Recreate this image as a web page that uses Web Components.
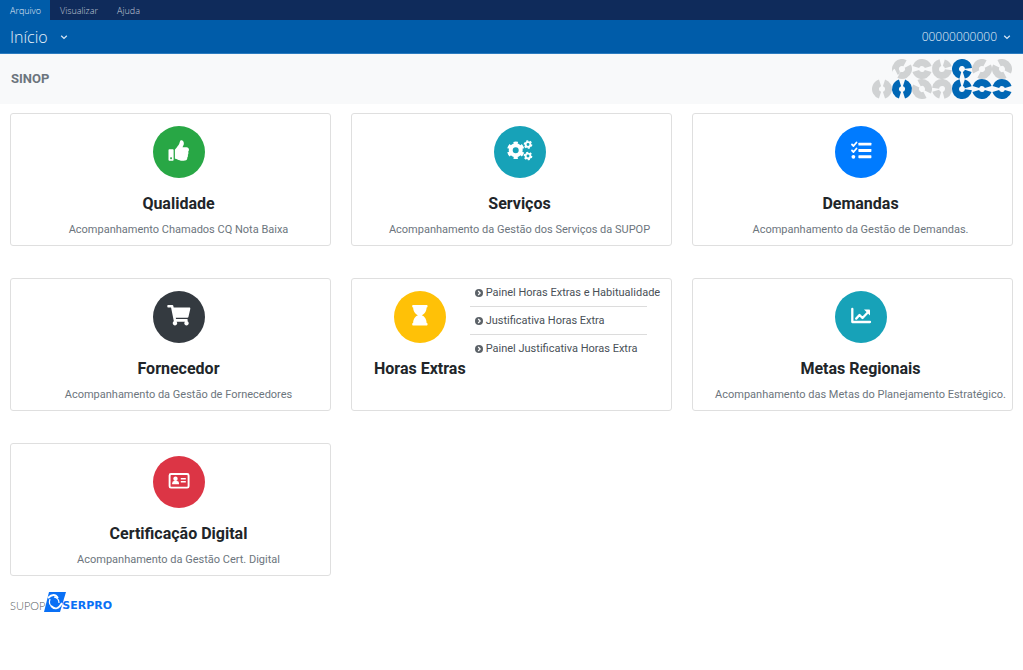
<!DOCTYPE html>
<html lang="pt-BR">
<head>
<meta charset="utf-8">
<meta name="viewport" content="width=device-width, initial-scale=1">
<title>SINOP</title>
<style>
  body { margin: 0; background: #fff; font-family: Roboto, "Liberation Sans", sans-serif; color: #212529; }
</style>
</head>
<body>
<sinop-app></sinop-app>
<script>
const define = (name, html, setup) => {
  const template = document.createElement('template');
  template.innerHTML = html;
  customElements.define(name, class extends HTMLElement {
    connectedCallback() {
      if (this.shadowRoot) return;
      const root = this.attachShadow({ mode: 'open' });
      root.append(template.content.cloneNode(true));
      if (setup) setup(this, root);
    }
  });
};

/* Each glyph is drawn on a 52 x 52 disc. */
const glyphs = {
  thumb: '<path transform="translate(15.5 14.3) scale(.04)" d="M104 224H24c-13.255 0-24 10.745-24 24v240c0 13.255 10.745 24 24 24h80c13.255 0 24-10.745 24-24V248c0-13.255-10.745-24-24-24zM64 472c-13.255 0-24-10.745-24-24s10.745-24 24-24 24 10.745 24 24-10.745 24-24 24zM384 81.452c0 42.416-25.97 66.208-33.277 94.548h101.723c33.397 0 59.397 27.746 59.553 58.098.084 17.938-7.546 37.249-19.439 49.197l-.11.11c9.836 23.337 8.237 56.037-9.308 79.469 8.681 25.895-.069 57.704-16.382 74.757 4.298 17.598 2.244 32.575-6.148 44.632C440.202 511.587 389.616 512 346.839 512l-2.845-.001c-48.287-.017-87.806-17.598-119.56-31.725-15.957-7.099-36.821-15.887-52.651-16.178-6.54-.12-11.783-5.457-11.783-11.998v-213.77c0-3.2 1.282-6.271 3.558-8.521 39.614-39.144 56.648-80.587 89.117-113.111 14.804-14.832 20.188-37.236 25.393-58.902C282.515 39.293 291.817 0 312 0c24 0 72 8 72 81.452z"/>',
  cogs: '<g fill="none" stroke="#fff"><circle cx="21.7" cy="24.3" r="5" stroke-width="4"/><circle cx="21.7" cy="24.3" r="7.4" stroke-width="2.6" pathLength="60" stroke-dasharray="5.4 4.6" transform="rotate(13.8 21.7 24.3)"/><circle cx="34" cy="18.5" r="2.4" stroke-width="1.9"/><circle cx="34" cy="18.5" r="3.6" stroke-width="1.5" pathLength="60" stroke-dasharray="5.6 4.4"/><circle cx="34" cy="30" r="2.4" stroke-width="1.9"/><circle cx="34" cy="30" r="3.6" stroke-width="1.5" pathLength="60" stroke-dasharray="5.6 4.4"/></g>',
  tasks: '<g fill="none" stroke="#fff" stroke-linejoin="round" stroke-linecap="round" stroke-width="1.8"><path d="M17 18.5l1.5 1.5 3-3.5M17 24.5l1.5 1.5 3-3.5"/></g><circle cx="18.4" cy="30.8" r="1.9"/><rect x="23.4" y="16.7" width="13" height="2.9" rx=".6"/><rect x="23.4" y="23" width="13" height="2.9" rx=".6"/><rect x="23.4" y="29.3" width="13" height="2.9" rx=".6"/>',
  cart: '<path transform="translate(14.3 14) scale(.04)" d="M528.12 301.319l47.273-208C578.806 78.301 567.391 64 551.99 64H159.208l-9.166-44.81C147.758 8.021 137.93 0 126.529 0H24C10.745 0 0 10.745 0 24v16c0 13.255 10.745 24 24 24h69.883l70.248 343.435C147.325 417.1 136 435.222 136 456c0 30.928 25.072 56 56 56s56-25.072 56-56c0-15.674-6.447-29.835-16.824-40h209.647C430.447 426.165 424 440.326 424 456c0 30.928 25.072 56 56 56s56-25.072 56-56c0-22.172-12.888-41.332-31.579-50.405l5.517-24.276c3.413-15.018-8.002-29.319-23.403-29.319H218.117l-6.545-32h293.145c11.206 0 20.92-7.754 23.403-18.681z"/>',
  hourglass: '<path transform="translate(18.2 14) scale(.04)" d="M360 64c13.255 0 24-10.745 24-24V24c0-13.255-10.745-24-24-24H24C10.745 0 0 10.745 0 24v16c0 13.255 10.745 24 24 24 0 90.965 51.016 167.734 120.842 192C75.016 280.266 24 357.035 24 448c-13.255 0-24 10.745-24 24v16c0 13.255 10.745 24 24 24h336c13.255 0 24-10.745 24-24v-16c0-13.255-10.745-24-24-24 0-90.965-51.016-167.734-120.842-192C308.984 231.734 360 154.965 360 64z"/>',
  chart: '<g fill="none" stroke="#fff" stroke-linejoin="round" stroke-linecap="round" stroke-width="2.3"><path d="M17.3 18v13H35"/><path d="M21.2 27.6l3.3-3.6 3 3 5-5.2"/></g><path d="M29 18.4h5.2q.8 0 .8.8v5.2z"/>',
  card: '<rect x="16.6" y="18" width="19" height="13.6" rx="1.4" fill="none" stroke="#fff" stroke-width="1.9"/><circle cx="22.5" cy="22.7" r="2.2"/><path d="M19.2 28.2v-1q0-2.2 2-2.2h2.8q2 0 2 2.2v1z"/><path d="M27.8 22h5v1.5h-5zM27.8 25h5v1.5h-5z"/>'
};

define('icon-disc', `
  <style>
    :host { display: block; width: 52px; height: 52px; }
    svg { display: block; width: 100%; height: 100%; fill: #fff; }
  </style>
  <svg viewBox="0 0 52 52" aria-hidden="true"><circle cx="26" cy="26" r="26"/><g></g></svg>`,
  (host, root) => {
    root.querySelector('circle').setAttribute('fill', host.getAttribute('color'));
    root.querySelector('g').innerHTML = glyphs[host.getAttribute('glyph')];
  });

define('nav-chevron', `
  <style>
    :host { display: block; width: 8px; height: 8px; }
    svg { display: block; fill: none; stroke: #d6e6f4; stroke-width: 1.3; }
  </style>
  <svg width="8" height="8" viewBox="0 0 8 8" aria-hidden="true"><path d="M1.2 2.8L4 5.4l2.8-2.6"/></svg>`);

define('menu-bar', `
  <style>
    :host { display: block; background: #0f2b5b; font-family: "Open Sans", sans-serif; font-weight: 300; }
    nav { display: flex; height: 20px; }
    a { padding: 0 9px 0 10px; font-size: 9px; line-height: 21px; color: #c6cdd9; text-decoration: none; }
    a[aria-current] { background: #005ca9; color: #e0ecf6; }
  </style>
  <nav><a href="#arquivo" aria-current="true">Arquivo</a><a href="#visualizar">Visualizar</a><a href="#ajuda">Ajuda</a></nav>`);

define('title-bar', `
  <style>
    :host { display: flex; justify-content: space-between; align-items: center; height: 33px; padding: 0 12px 0 10px;
      background: #005ca9; border-bottom: 1px solid #2b7cc0; font-family: "Open Sans", sans-serif; }
    button { display: flex; align-items: center; border: 0; padding: 0; background: none; color: #e6f0f8; font: 300 16px/32px "Open Sans", sans-serif; }
    .page { gap: 12px; }
    .user { gap: 6px; font-size: 12px; }
  </style>
  <button class="page">Início <nav-chevron></nav-chevron></button>
  <button class="user">00000000000 <nav-chevron></nav-chevron></button>`);

define('sinop-mark', `
  <style>
    :host { display: block; }
    svg { display: block; fill: none; stroke-width: 7; }
  </style>
  <svg width="140" height="40" viewBox="0 0 140 40" role="img" aria-label="SINOP"></svg>`,
  (host, root) => {
    const grey = '#d0d2d3', blue = '#0067b5';
    const pair = '72 18 72 18', hookDown = '124 12 28 16', hookUp = '124 16 28 12';
    /* column, row, colour, dash pattern out of 180, start angle */
    const rings = [
      [1, 0, grey, pair, -27], [2, 0, grey, pair, 18], [3, 0, grey, hookUp, 7], [4, 0, blue, hookDown, 105],
      [5, 0, grey, pair, -27], [6, 0, grey, pair, 63],
      [0, 1, grey, pair, 108], [1, 1, blue, pair, 108], [2, 1, grey, pair, 63], [3, 1, grey, hookUp, 187],
      [4, 1, blue, hookUp, 7], [5, 1, blue, pair, 18], [6, 1, blue, pair, 18]
    ];
    root.querySelector('svg').innerHTML = rings.map(([c, r, color, dash, turn]) => {
      const x = c * 20 + 10, y = r * 20 + 10;
      return `<circle cx="${x}" cy="${y}" r="6.5" pathLength="180" stroke="${color}" stroke-dasharray="${dash}" transform="rotate(${turn} ${x} ${y})"/>`;
    }).join('');
  });

define('brand-strip', `
  <style>
    :host { display: flex; justify-content: space-between; align-items: center; height: 50px; padding: 0 11px; background: #f8f9fa; }
    h1 { margin: 0; font-size: 13px; line-height: 20px; font-weight: 700; color: #6c757d; }
  </style>
  <h1>SINOP</h1><sinop-mark></sinop-mark>`);

define('service-card', `
  <style>
    :host { display: flex; box-sizing: border-box; min-width: 0; min-height: 133px; padding: 12px 0 5px 16px;
      border: 1px solid #dfdfdf; border-radius: 3px; background: #fff; }
    .main { flex: 1; display: flex; flex-direction: column; align-items: center; min-width: 0; }
    h2 { margin: 14px 0 4px; font-size: 16px; line-height: 24px; font-weight: 700; white-space: nowrap; }
    p { margin: 0; font-size: 11px; line-height: 20px; color: #6c757d; white-space: nowrap; }
    :host([linked]) .main { flex: none; padding: 0 4px 0 6px; }
  </style>
  <div class="main"><h2></h2><p></p></div><slot></slot>`,
  (host, root) => {
    const disc = document.createElement('icon-disc');
    disc.setAttribute('color', host.getAttribute('color'));
    disc.setAttribute('glyph', host.getAttribute('glyph'));
    root.querySelector('.main').prepend(disc);
    root.querySelector('h2').textContent = host.getAttribute('heading');
    root.querySelector('p').textContent = host.getAttribute('text') || '';
  });

define('panel-link', `
  <style>
    :host { display: block; border-bottom: 1px solid #dcdcdc; }
    :host(:last-child) { border-bottom: 0; }
    a { display: flex; align-items: center; gap: 3px; padding: 0 5px; font-size: 11px; line-height: 27px; color: #495057; text-decoration: none; white-space: nowrap; }
    svg { flex: none; }
  </style>
  <a href="#painel"><svg width="8" height="8" viewBox="0 0 8 8" aria-hidden="true"><circle cx="4" cy="4" r="4" fill="#5c6268"/><path d="M3.2 2l2 2-2 2" fill="none" stroke="#fff" stroke-width="1.2"/></svg><slot></slot></a>`);

define('link-list', `
  <style>
    :host { display: block; width: 177px; margin-top: -12px; }
  </style>
  <slot></slot>`);

define('serpro-footer', `
  <style>
    :host { display: flex; align-items: flex-end; padding: 15px 10px; height: 22px; }
    .unit { font: 300 11px/14px Lato, sans-serif; color: #555b61; }
    .name { font: 700 11px/14px "DejaVu Sans", sans-serif; color: #0a70f5; margin-left: -4px; }
    svg { display: block; align-self: flex-start; margin-left: -1px; }
  </style>
  <span class="unit">SUPOP</span>
  <svg width="22" height="22" viewBox="0 0 22 22" aria-hidden="true"><path d="M5 1h17l-6 20H0z" fill="#0a70f5"/><g fill="none" stroke="#fff"><path d="M4 7Q10 1 14 7M18 12q-5 9-11 3" stroke-width="1.8"/><path d="M6 8q-2 6 3 8M10 6q5 1 5 6" stroke-width="1.2"/></g></svg>
  <span class="name">SERPRO</span>`);

define('sinop-app', `
  <style>
    :host { display: block; }
    main { display: grid; grid-template-columns: repeat(3, minmax(0, 1fr)); gap: 32px 20px; padding: 9px 10px 0; }
  </style>
  <header><menu-bar></menu-bar><title-bar></title-bar><brand-strip></brand-strip></header>
  <main>
    <service-card color="#28a745" glyph="thumb" heading="Qualidade" text="Acompanhamento Chamados CQ Nota Baixa"></service-card>
    <service-card color="#17a2b8" glyph="cogs" heading="Serviços" text="Acompanhamento da Gestão dos Serviços da SUPOP"></service-card>
    <service-card color="#007bff" glyph="tasks" heading="Demandas" text="Acompanhamento da Gestão de Demandas."></service-card>
    <service-card color="#343a40" glyph="cart" heading="Fornecedor" text="Acompanhamento da Gestão de Fornecedores"></service-card>
    <service-card linked color="#ffc107" glyph="hourglass" heading="Horas Extras">
      <link-list>
        <panel-link>Painel Horas Extras e Habitualidade</panel-link>
        <panel-link>Justificativa Horas Extra</panel-link>
        <panel-link>Painel Justificativa Horas Extra</panel-link>
      </link-list>
    </service-card>
    <service-card color="#17a2b8" glyph="chart" heading="Metas Regionais" text="Acompanhamento das Metas do Planejamento Estratégico."></service-card>
    <service-card color="#dc3545" glyph="card" heading="Certificação Digital" text="Acompanhamento da Gestão Cert. Digital"></service-card>
  </main>
  <serpro-footer></serpro-footer>`);
</script>
</body>
</html>
